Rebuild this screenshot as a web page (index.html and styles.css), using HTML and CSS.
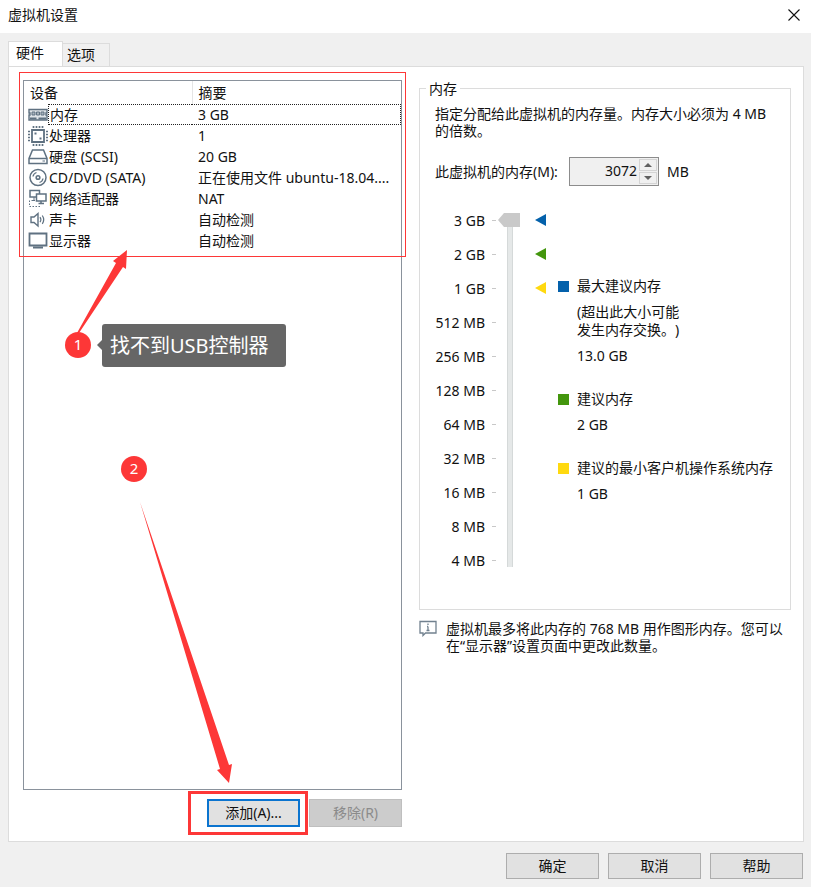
FILE: index.html
```html
<!DOCTYPE html>
<html lang="zh-CN">
<head>
    <meta charset="UTF-8">
    <meta name="viewport" content="width=device-width, initial-scale=1.0">
    <title>虚拟机设置</title>
    <link rel="stylesheet" href="styles.css">
</head>
<body>
    <div class="window">
        <header class="titlebar">
            <h1>虚拟机设置</h1>
            <button type="button" class="close" aria-label="关闭">
                <svg width="12" height="12" viewBox="0 0 12 12"><path d="M0.5 0.5L11.5 11.5M11.5 0.5L0.5 11.5" stroke="#111" stroke-width="1.1"/></svg>
            </button>
        </header>

        <main class="content">
            <div class="tabs" role="tablist">
                <button type="button" class="tab active" role="tab" aria-selected="true">硬件</button>
                <button type="button" class="tab" role="tab" aria-selected="false">选项</button>
            </div>

            <div class="panel">
                <section class="hardware">
                    <div class="device-list">
                        <table class="devices">
                            <thead>
                                <tr><th class="col-name">设备</th><th>摘要</th></tr>
                            </thead>
                            <tbody>
                                <tr class="selected">
                                    <td><div class="device">
                                        <svg class="icon" viewBox="0 0 20 20"><path d="M1 4.500h18v3.500h-1v2h1v5H1v-5h1V8H1z" fill="#dfe4e8" stroke="#5f7181" stroke-width="1.4"/><path d="M4 7h3v3H4zM8.500 7h3v3h-3zM13 7h3v3h-3z" fill="#a9b4bd" stroke="#5f7181"/><path d="M2 13.500h6.500M10.500 13.500H18" stroke="#5f7181" stroke-width="2"/></svg>
                                        <span>内存</span>
                                    </div></td>
                                    <td>3 GB</td>
                                </tr>
                                <tr>
                                    <td><div class="device">
                                        <svg class="icon" viewBox="0 0 20 20"><path d="M4 4h12v12H4z" fill="#fff" stroke="#5f7181" stroke-width="1.800"/><path d="M5.500 0v2M8.500 0v2M11.500 0v2M14.500 0v2M5.500 18v2M8.500 18v2M11.500 18v2M14.500 18v2M0 5.500h2M0 8.500h2M0 11.500h2M0 14.500h2M18 5.500h2M18 8.500h2M18 11.500h2M18 14.500h2" stroke="#5f7181" stroke-width="1.700"/><path d="M6.500 6.500h2v2h-2zM11.500 11.500h2v2h-2z" fill="#5f7181"/></svg>
                                        <span>处理器</span>
                                    </div></td>
                                    <td>1</td>
                                </tr>
                                <tr>
                                    <td><div class="device">
                                        <svg class="icon" viewBox="0 0 20 20"><path d="M4.500 3h11L19 11.500v5H1v-5z" fill="#fff" stroke="#5f7181" stroke-width="1.500"/><path d="M1 11.500h18" stroke="#5f7181" stroke-width="1.500"/><path d="M14.500 14h2.500" stroke="#5f7181"/></svg>
                                        <span>硬盘 (SCSI)</span>
                                    </div></td>
                                    <td>20 GB</td>
                                </tr>
                                <tr>
                                    <td><div class="device">
                                        <svg class="icon" viewBox="0 0 20 20" fill="none" stroke="#5f7181"><circle cx="10" cy="9.500" r="8" stroke-width="1.500"/><circle cx="10" cy="9.500" r="1.800" stroke-width="1.600"/><path d="M5 8.500a5 5 0 0 1 3.500-4M15 10.500a5 5 0 0 1-3.500 4" stroke-width="1.300"/></svg>
                                        <span>CD/DVD (SATA)</span>
                                    </div></td>
                                    <td>正在使用文件 ubuntu-18.04....</td>
                                </tr>
                                <tr>
                                    <td><div class="device">
                                        <svg class="icon" viewBox="0 0 20 20" fill="#fff" stroke="#5f7181"><path d="M2 1.500h9.500V8H2z" stroke-width="1.500"/><path d="M6 8v3M3.500 11.500H7"/><path d="M8.500 5h9.500v7H8.500z" stroke-width="1.500"/><path d="M13 12v2.500M10.500 14.500H16" stroke-width="1.500"/><path d="M1.500 11.500v6h12" fill="none" stroke-dasharray="1.500 1.500"/></svg>
                                        <span>网络适配器</span>
                                    </div></td>
                                    <td>NAT</td>
                                </tr>
                                <tr>
                                    <td><div class="device">
                                        <svg class="icon" viewBox="0 0 20 20" fill="none" stroke="#5f7181"><path d="M3 7h3l4-3.500v12.500L6 12.500H3z" stroke-width="1.400"/><path d="M12 7.200q1.800 2.500 0 5M14.300 5.500q2.800 4.200 0 8.400" stroke-width="1.200"/></svg>
                                        <span>声卡</span>
                                    </div></td>
                                    <td>自动检测</td>
                                </tr>
                                <tr>
                                    <td><div class="device">
                                        <svg class="icon" viewBox="0 0 20 20"><path d="M1.500 2.500h17V14.500h-17z" fill="#fff" stroke="#5f7181" stroke-width="1.800"/><path d="M5 16.500h10" stroke="#5f7181" stroke-width="2"/></svg>
                                        <span>显示器</span>
                                    </div></td>
                                    <td>自动检测</td>
                                </tr>
                            </tbody>
                        </table>

                        <!-- 步骤标注 -->
                        <div class="mark-frame"></div>
                        <svg class="mark-arrows" width="240" height="710" viewBox="0 0 240 710" fill="#fd3737">
                            <path d="M54 253L93 183L90 181L104 170L103 189L100 187L56 253z"/>
                            <path d="M117 422L206 685L209 684L206 703L194 690L197 689z"/>
                        </svg>
                        <span class="step step-one">1</span>
                        <span class="step step-two">2</span>
                        <div class="callout">找不到USB控制器</div>
                    </div>
                    <div class="list-actions">
                        <span class="highlight"><button type="button" class="btn focused">添加(A)...</button></span>
                        <button type="button" class="btn" disabled>移除(R)</button>
                    </div>
                </section>

                <section class="settings">
                    <fieldset class="memory">
                        <legend>内存</legend>
                        <div class="memory-body">
                            <p>指定分配给此虚拟机的内存量。内存大小必须为 4 MB 的倍数。</p>
                            <div class="amount">
                                <label for="memory">此虚拟机的内存(M):</label>
                                <span class="spinner">
                                    <input type="number" id="memory" value="3072" disabled>
                                    <span class="spin-buttons">
                                        <button type="button" aria-label="增加" disabled><svg width="8" height="4" viewBox="0 0 8 4"><path d="M0 4L4 0L8 4z" fill="#606060"/></svg></button>
                                        <button type="button" aria-label="减少" disabled><svg width="8" height="4" viewBox="0 0 8 4"><path d="M0 0L4 4L8 0z" fill="#606060"/></svg></button>
                                    </span>
                                </span>
                                <span>MB</span>
                            </div>
                            <div class="sizing">
                                <ul class="scale">
                                    <li>3 GB</li>
                                    <li>2 GB</li>
                                    <li>1 GB</li>
                                    <li>512 MB</li>
                                    <li>256 MB</li>
                                    <li>128 MB</li>
                                    <li>64 MB</li>
                                    <li>32 MB</li>
                                    <li>16 MB</li>
                                    <li>8 MB</li>
                                    <li>4 MB</li>
                                </ul>
                                <input type="range" class="slider" min="0" max="10" value="10" aria-label="内存大小" disabled>
                                <div class="markers">
                                    <svg width="11" height="12" viewBox="0 0 11 12"><path d="M0 6L11 0V12z" fill="#0461ab"/></svg>
                                    <svg width="11" height="12" viewBox="0 0 11 12"><path d="M0 6L11 0V12z" fill="#43960d"/></svg>
                                    <svg width="11" height="12" viewBox="0 0 11 12"><path d="M0 6L11 0V12z" fill="#ffd90f"/></svg>
                                </div>
                                <dl class="hints">
                                    <dt class="max">最大建议内存</dt>
                                    <dd>(超出此大小可能<br>发生内存交换。)</dd>
                                    <dd>13.0 GB</dd>
                                    <dt class="recommended">建议内存</dt>
                                    <dd>2 GB</dd>
                                    <dt class="min">建议的最小客户机操作系统内存</dt>
                                    <dd>1 GB</dd>
                                </dl>
                            </div>
                        </div>
                    </fieldset>
                    <div class="note">
                        <svg width="18" height="17" viewBox="0 0 18 17"><path d="M1 1.500h16v11.500H6.500L4 15.500V13H1z" fill="#fff" stroke="#71818f" stroke-width="1.300"/><path d="M9 3.500v1.500M9 6.500v4M7.500 10.500h3M8 6.500h1" stroke="#71818f" stroke-width="1.300"/></svg>
                        <p>虚拟机最多将此内存的 768 MB 用作图形内存。您可以在“显示器”设置页面中更改此数量。</p>
                    </div>
                </section>
            </div>
        </main>

        <footer class="footer">
            <button type="button" class="btn">确定</button>
            <button type="button" class="btn">取消</button>
            <button type="button" class="btn">帮助</button>
        </footer>
    </div>
</body>
</html>
```
FILE: styles.css
```css
:root {
    --red: #fd3737;
    --line: #dcdcdc;
    --face: #f0f0f0;
}

* {
    box-sizing: border-box;
}

body {
    margin: 0;
    padding: 0 5px 1px 0;
    background: #fff;
    color: #111;
    font-family: "Noto Sans", "Noto Sans CJK SC", sans-serif;
    font-size: 14px;
    line-height: 17px;
    text-spacing-trim: space-all;
}

h1, p, ul, dl, dd {
    margin: 0;
    padding: 0;
}

button, input {
    font: inherit;
    color: inherit;
}

.window {
    min-height: calc(100vh - 1px);
    display: flex;
    flex-direction: column;
    background: var(--face);
}

.titlebar {
    display: flex;
    align-items: center;
    justify-content: space-between;
    height: 33px;
    padding: 0 11px 4px 8px;
    background: #fff;
}

.titlebar h1 {
    font-size: 14px;
    font-weight: normal;
}

.close {
    display: flex;
    padding: 0;
    border: none;
    background: none;
}

.content {
    flex: 1;
    display: flex;
    flex-direction: column;
    padding: 8px 7px 0 8px;
}

/* 标签页 */
.tabs {
    display: flex;
    align-items: flex-end;
}

.tab {
    height: 23px;
    padding: 0 14px 2px 4px;
    border: 1px solid var(--line);
    border-width: 1px 1px 0 0;
    background: var(--face);
}

.tab.active {
    height: 26px;
    margin-bottom: -1px;
    padding: 0 18px 4px 7px;
    border-width: 1px 1px 0 1px;
    background: #fff;
}

.panel {
    flex: 1;
    display: grid;
    grid-template-columns: 379fr 372fr;
    gap: 17px;
    padding: 13px 12px 6px 14px;
    border: 1px solid var(--line);
    background: #fff;
}

/* 设备列表 */
.hardware {
    display: flex;
    flex-direction: column;
}

.device-list {
    flex: 1;
    position: relative;
    border: 1px solid #8a929c;
}

.devices {
    width: 100%;
    table-layout: fixed;
    border-collapse: collapse;
}

.devices th {
    height: 23px;
    padding: 0 6px;
    font-weight: normal;
    text-align: left;
}

.devices .col-name {
    width: 168px;
    border-right: 1px solid #e5e5e5;
}

.devices td {
    height: 21px;
    padding: 0 6px;
    white-space: nowrap;
}

.devices td:first-child {
    padding: 0 0 0 4px;
}

.device {
    display: flex;
    align-items: center;
    height: 21px;
}

.device span {
    flex: 1;
    padding-left: 1px;
    line-height: 19px;
}

.icon {
    width: 20px;
    height: 20px;
}

.selected .device span {
    border: 1px dotted #222;
    border-right: none;
    padding-left: 1px;
}

.selected td + td {
    background:
        repeating-linear-gradient(90deg, #222 0 1px, transparent 1px 2px) 0 0 / 100% 1px no-repeat,
        repeating-linear-gradient(90deg, #222 0 1px, transparent 1px 2px) 0 100% / 100% 1px no-repeat,
        repeating-linear-gradient(#222 0 1px, transparent 1px 2px) 100% 0 / 1px 100% no-repeat;
}

.list-actions {
    display: flex;
    justify-content: flex-end;
    align-items: center;
    gap: 1px;
    margin-top: 1px;
}

.highlight {
    padding: 5px 5px 5px 16px;
    border: 3px solid var(--red);
}

.btn {
    width: 93px;
    height: 26px;
    padding: 0 0 1px;
    border: 1px solid #adadad;
    background: #e1e1e1;
}

.highlight .btn {
    display: block;
    height: 28px;
}

.btn.focused {
    border: 2px solid #0b74cf;
}

.btn:disabled {
    height: 28px;
    border-color: #bfbfbf;
    background: #ccc;
    color: #8b8b8b;
}

/* 标注层 */
.mark-frame {
    position: absolute;
    top: -9px;
    left: -5px;
    right: -5px;
    height: 185px;
    border: 1px solid var(--red);
}

.mark-arrows {
    position: absolute;
    top: -1px;
    left: -1px;
}

.step {
    position: absolute;
    width: 26px;
    height: 26px;
    border-radius: 50%;
    background: var(--red);
    color: #fff;
    font-size: 15px;
    line-height: 25px;
    text-align: center;
}

.step-one {
    top: 251px;
    left: 41px;
}

.step-two {
    top: 375px;
    left: 97px;
}

.callout {
    position: absolute;
    top: 243px;
    left: 78px;
    padding: 10px 17px 9px 8px;
    border-radius: 3px;
    background: #666;
    color: #fff;
    font-size: 20px;
    line-height: 24px;
}

.callout::before {
    content: "";
    position: absolute;
    top: 16px;
    left: -5px;
    border: 5px solid transparent;
    border-left: none;
    border-right-color: #666;
}

/* 内存设置 */
.memory {
    min-width: 0;
    margin: 0;
    padding: 8px 6px 32px;
    border: 1px solid var(--line);
}

.memory legend {
    padding: 0 3px;
}

.memory-body {
    padding: 0 8px 0 9px;
}

.amount {
    display: flex;
    align-items: center;
    gap: 8px;
    margin-top: 18px;
}

.amount label {
    min-width: 126px;
}

.spinner {
    display: flex;
    width: 90px;
    height: 29px;
    padding: 1px;
    border: 1px solid #8c8c8c;
    background: var(--face);
}

.spinner input {
    flex: 1;
    min-width: 0;
    padding: 0 2px 3px 0;
    border: none;
    background: none;
    text-align: right;
    appearance: textfield;
}

.spinner input::-webkit-inner-spin-button {
    display: none;
}

.spin-buttons {
    display: flex;
    flex-direction: column;
    gap: 1px;
    width: 18px;
}

.spin-buttons button {
    flex: 1;
    display: flex;
    align-items: center;
    justify-content: center;
    padding: 0;
    border: 1px solid #d4d4d4;
    background: var(--face);
}

.sizing {
    display: flex;
    margin-top: 17px;
}

.scale {
    width: 61px;
    list-style: none;
}

.scale li {
    display: flex;
    align-items: center;
    justify-content: flex-end;
    gap: 7px;
    height: 34px;
}

.scale li::after {
    content: "";
    width: 4px;
    height: 1px;
    background: #c8c8c8;
}

.slider {
    appearance: none;
    writing-mode: vertical-lr;
    direction: rtl;
    width: 22px;
    height: 354px;
    margin: 10px 0 0 2px;
    background: linear-gradient(90deg, transparent 9px, #d5d9d9 9px 10px, #e5e8e8 10px 14px, #d5d9d9 14px 15px, transparent 15px);
}

.slider::-webkit-slider-thumb {
    appearance: none;
    width: 22px;
    height: 14px;
    background: #c9c9c9;
    clip-path: polygon(0 50%, 6px 0, 100% 0, 100% 100%, 6px 100%);
}

.markers {
    display: flex;
    flex-direction: column;
    gap: 22px;
    margin: 11px 12px 0 15px;
}

.hints {
    flex: 1;
    margin-top: 74px;
    line-height: 18px;
}

.hints dt {
    display: flex;
    align-items: center;
    gap: 8px;
    white-space: nowrap;
}

.hints dt::before {
    content: "";
    width: 11px;
    height: 11px;
}

.hints .max::before {
    background: #0461ab;
}

.hints .recommended::before {
    background: #43960d;
}

.hints .min::before {
    background: #ffd90f;
}

.hints dd {
    margin-top: 8px;
    padding-left: 19px;
}

.hints dd + dt {
    margin-top: 25px;
}

.note {
    display: flex;
    align-items: flex-start;
    gap: 9px;
    margin-top: 10px;
}

.note svg {
    flex: none;
}

.footer {
    display: flex;
    justify-content: flex-end;
    gap: 9px;
    padding: 11px 8px 8px;
}
```
